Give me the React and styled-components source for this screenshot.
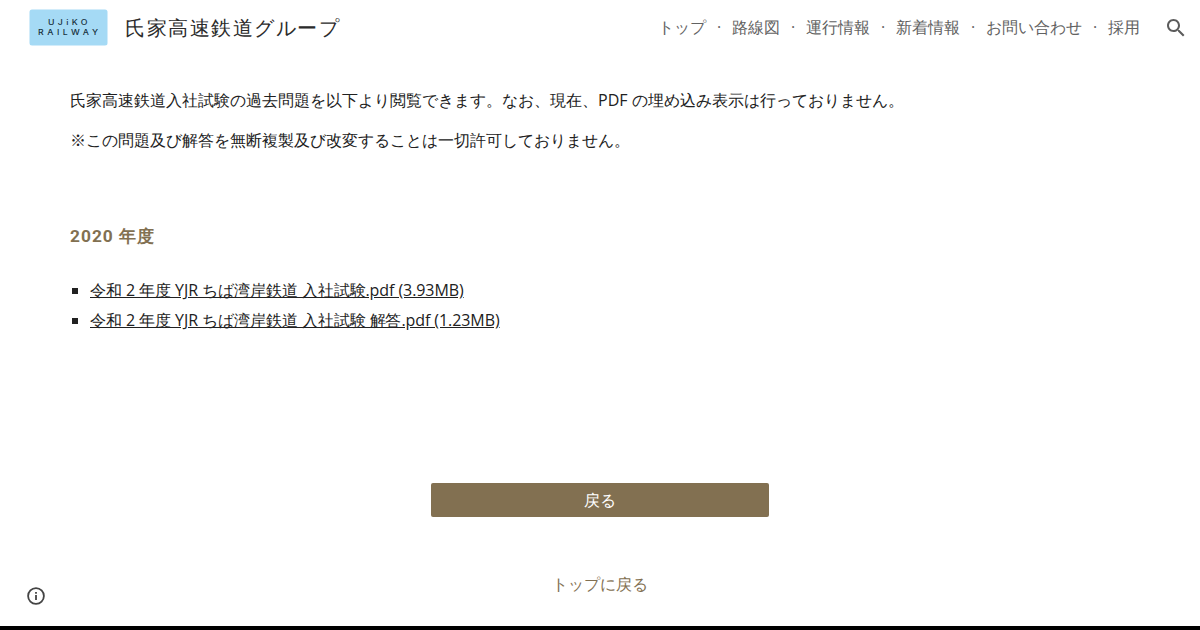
import React from 'react';
import styled, { createGlobalStyle } from 'styled-components';

const GlobalStyle = createGlobalStyle`
  * {
    box-sizing: border-box;
  }

  body {
    margin: 0;
    background: #fff;
    color: #212121;
    font-family: 'Open Sans', sans-serif;
    font-size: 16px;
    line-height: 24px;
    overflow: hidden;
  }
`;

const Page = styled.div`
  display: flex;
  flex-direction: column;
  height: 630px;
  border-bottom: 4px solid #000;
`;

const Header = styled.header`
  display: flex;
  align-items: center;
  height: 56px;
  padding: 0 12px 0 29px;
`;

const Logo = styled.svg`
  width: 79px;
  height: 37px;
  margin: -1px 17px 0 0;
`;

const LogoText = styled.text`
  font-family: 'Inter', sans-serif;
  font-size: 7px;
  font-weight: 500;
  fill: #17303c;
`;

const SiteName = styled.a`
  font-family: Roboto, sans-serif;
  font-size: 20px;
  font-weight: 400;
  letter-spacing: 1.5px;
  color: #2b2b2b;
`;

const Nav = styled.nav`
  display: flex;
  align-items: center;
  margin: -2px 0 0 auto;
`;

const NavLink = styled.a`
  color: #626262;
  white-space: nowrap;

  & + &::before {
    content: '·';
    display: inline-block;
    width: 26px;
    text-align: center;
  }
`;

const IconButton = styled.button`
  display: flex;
  padding: 0;
  border: none;
  background: none;
  color: ${({ $color }) => $color};
`;

const SearchButton = styled(IconButton)`
  margin-left: 24px;
`;

const Content = styled.main`
  flex: 1;
  display: flex;
  flex-direction: column;
  padding: 32px 70px 0;
`;

const Paragraph = styled.p`
  margin: 0 0 16px;
`;

const Heading = styled.h3`
  margin: 56px 0 0;
  font-family: Roboto, sans-serif;
  font-size: 17.33px;
  font-weight: 700;
  letter-spacing: 1px;
  color: #827051;
`;

const FileList = styled.ul`
  display: flex;
  flex-direction: column;
  gap: 6px;
  margin: 30px 0 0;
  padding: 0;
  list-style: none;
`;

const FileItem = styled.li`
  display: flex;
  align-items: center;
  gap: 12px;
  padding-left: 2px;

  &::before {
    content: '';
    width: 6px;
    height: 6px;
    margin-top: 2px;
    background: #212121;
  }
`;

const FileLink = styled.a`
  letter-spacing: -0.07px;
  text-decoration: underline;
`;

const BackButton = styled.button`
  align-self: center;
  width: 338px;
  height: 34px;
  margin-top: 151px;
  padding: 0;
  border: none;
  border-radius: 2px;
  background: #827051;
  color: #fff;
  font: inherit;
`;

const Footer = styled.footer`
  display: grid;
  grid-template-columns: 44px 1fr 44px;
  height: 71px;
  padding: 0 24px;
`;

const InfoButton = styled(IconButton)`
  align-self: start;
  padding: 29px 0 0;
`;

const TopLink = styled.a`
  padding-top: 17px;
  text-align: center;
  color: #827051;
`;

const navItems = ['トップ', '路線図', '運行情報', '新着情報', 'お問い合わせ', '採用'];

const files = [
  '令和 2 年度 YJR ちば湾岸鉄道 入社試験.pdf (3.93MB)',
  '令和 2 年度 YJR ちば湾岸鉄道 入社試験 解答.pdf (1.23MB)',
];

const App = () => {
  return (
    <>
      <GlobalStyle />
      <Page>
        <Header>
          <Logo viewBox="0 0 79 37">
            <rect x="0.5" y="0.5" width="78" height="36" rx="2.5" fill="#a5daf5" />
            <LogoText transform="translate(19 16.3) scale(1.25 1)" textLength="31.5">
              UJiKO
            </LogoText>
            <LogoText transform="translate(9 26.3) scale(1.25 1)" textLength="48">
              RAILWAY
            </LogoText>
          </Logo>
          <SiteName>氏家高速鉄道グループ</SiteName>
          <Nav>
            {navItems.map((item) => (
              <NavLink key={item}>{item}</NavLink>
            ))}
          </Nav>
          <SearchButton $color="#5c5c5c" aria-label="検索">
            <svg width="24" height="24" viewBox="0 0 24 24" fill="currentColor">
              <path d="M15.5 14h-.79l-.28-.27C15.41 12.59 16 11.11 16 9.5 16 5.91 13.09 3 9.5 3S3 5.91 3 9.5 5.91 16 9.5 16c1.61 0 3.09-.59 4.23-1.57l.27.28v.79l5 4.99L20.49 19l-4.99-5zm-6 0C7.01 14 5 11.99 5 9.5S7.01 5 9.5 5 14 7.01 14 9.5 11.99 14 9.5 14z" />
            </svg>
          </SearchButton>
        </Header>
        <Content>
          <Paragraph>
            氏家高速鉄道入社試験の過去問題を以下より閲覧できます。なお、現在、PDF の埋め込み表示は行っておりません。
          </Paragraph>
          <Paragraph>※この問題及び解答を無断複製及び改変することは一切許可しておりません。</Paragraph>
          <Heading>2020 年度</Heading>
          <FileList>
            {files.map((file) => (
              <FileItem key={file}>
                <FileLink>{file}</FileLink>
              </FileItem>
            ))}
          </FileList>
          <BackButton>戻る</BackButton>
        </Content>
        <Footer>
          <InfoButton $color="#444" aria-label="情報">
            <svg width="24" height="24" viewBox="0 0 24 24" fill="none" stroke="currentColor" strokeWidth="1.8">
              <circle cx="12" cy="12" r="7.9" />
              <path d="M12 11v5M12 8v1.8" />
            </svg>
          </InfoButton>
          <TopLink>トップに戻る</TopLink>
        </Footer>
      </Page>
    </>
  );
};

export default App;
